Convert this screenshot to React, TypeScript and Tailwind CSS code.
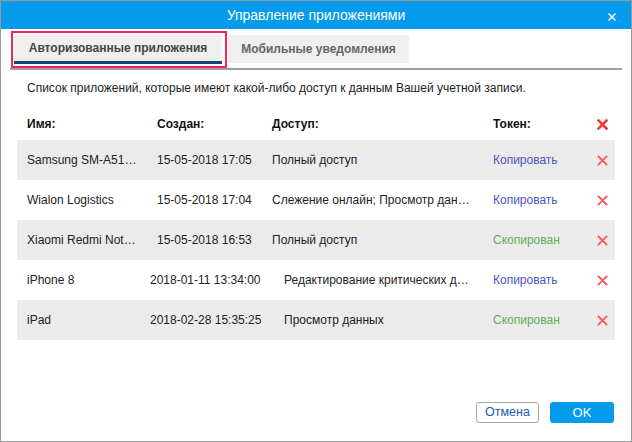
import React from 'react';

type Row = {
  name: string;
  date: string;
  access: string;
  copied: boolean;
  alt?: boolean;
};

const rows: Row[] = [
  { name: 'Samsung SM-A51…', date: '15-05-2018 17:05', access: 'Полный доступ', copied: false },
  { name: 'Wialon Logistics', date: '15-05-2018 17:04', access: 'Слежение онлайн; Просмотр дан…', copied: false },
  { name: 'Xiaomi Redmi Not…', date: '15-05-2018 16:53', access: 'Полный доступ', copied: true },
  { name: 'iPhone 8', date: '2018-01-11 13:34:00', access: 'Редактирование критических д…', copied: false, alt: true },
  { name: 'iPad', date: '2018-02-28 15:35:25', access: 'Просмотр данных', copied: true, alt: true },
];

const Cross = ({ bold }: { bold?: boolean }) => (
  <svg width="11" height="11" viewBox="0 0 11 11" className="shrink-0">
    <path
      d="M1.5 1.5 L9.5 9.5 M9.5 1.5 L1.5 9.5"
      stroke={bold ? '#f03a3a' : '#f85a5a'}
      strokeWidth={bold ? 2.6 : 1.8}
      strokeLinecap="square"
    />
  </svg>
);

const App: React.FC = () => {
  return (
    <div className="w-[632px] h-[442px] bg-white border border-[#9a9a9a] flex flex-col font-['Liberation_Sans',Arial,sans-serif] text-[12px] text-[#222]">
      <div className="h-[28px] bg-[#049bec] flex items-center justify-center relative shrink-0">
        <span className="text-white text-[14px]">Управление приложениями</span>
        <svg width="8" height="8" viewBox="0 0 8 8" className="absolute right-[15px] top-[12px]">
          <path d="M0.5 0.5 L7.5 7.5 M7.5 0.5 L0.5 7.5" stroke="#fff" strokeWidth="1.4" />
        </svg>
      </div>

      <div className="mx-[9px] mt-[2px] flex items-start border-b-2 border-[#a0a0a0] h-[39px]">
        <div className="border-2 border-[#f4245a] h-[37px] pl-[1px] pr-[3px] pt-[2px] ml-[1px]">
          <div className="w-[208px] h-[29px] bg-[#efefef] border-b-[3px] border-[#17456f] flex items-center justify-center font-bold text-[#454545] text-[12px]">
            Авторизованные приложения
          </div>
        </div>
        <div className="mt-[4px] ml-[1px] w-[181px] h-[28px] bg-[#efefef] flex items-center justify-center font-bold text-[#666] text-[12px]">
          Мобильные уведомления
        </div>
      </div>

      <div className="px-[16px] flex flex-col flex-1">
        <div className="pl-[10px] pt-[9px] h-[38px] leading-[18px]">
          Список приложений, которые имеют какой-либо доступ к данным Вашей учетной записи.
        </div>

        <div className="h-[32px] pl-[10px] flex items-center font-bold text-[#111]">
          <div className="w-[130px]">Имя:</div>
          <div className="w-[115px]">Создан:</div>
          <div className="w-[221px]">Доступ:</div>
          <div className="w-[104px]">Токен:</div>
          <Cross bold />
        </div>

        <div className="flex flex-col">
          {rows.map((r, i) => (
            <div
              key={i}
              className={`h-[40px] pl-[10px] flex items-center ${i % 2 === 0 ? 'bg-[#ebebeb]' : 'bg-white'}`}
            >
              <div className={r.alt ? 'w-[123px]' : 'w-[130px]'}>{r.name}</div>
              <div className={r.alt ? 'w-[134px]' : 'w-[115px]'}>{r.date}</div>
              <div className={r.alt ? 'w-[209px]' : 'w-[221px]'}>{r.access}</div>
              <div className={`w-[104px] ${r.copied ? 'text-[#5cb055]' : 'text-[#4a55c0]'}`}>
                {r.copied ? 'Скопирован' : 'Копировать'}
              </div>
              <Cross />
            </div>
          ))}
        </div>

        <div className="flex-1" />

        <div className="flex justify-end gap-[11px] pb-[18px] pr-[1px]">
          <button className="w-[63px] h-[21px] border border-[#a8a8a8] rounded-[3px] text-[#1a5ea8] text-[12.5px] bg-white flex items-center justify-center">
            Отмена
          </button>
          <button className="w-[64px] h-[21px] rounded-[3px] bg-[#049bec] text-white text-[13px] flex items-center justify-center">
            OK
          </button>
        </div>
      </div>
    </div>
  );
};

export default App;
